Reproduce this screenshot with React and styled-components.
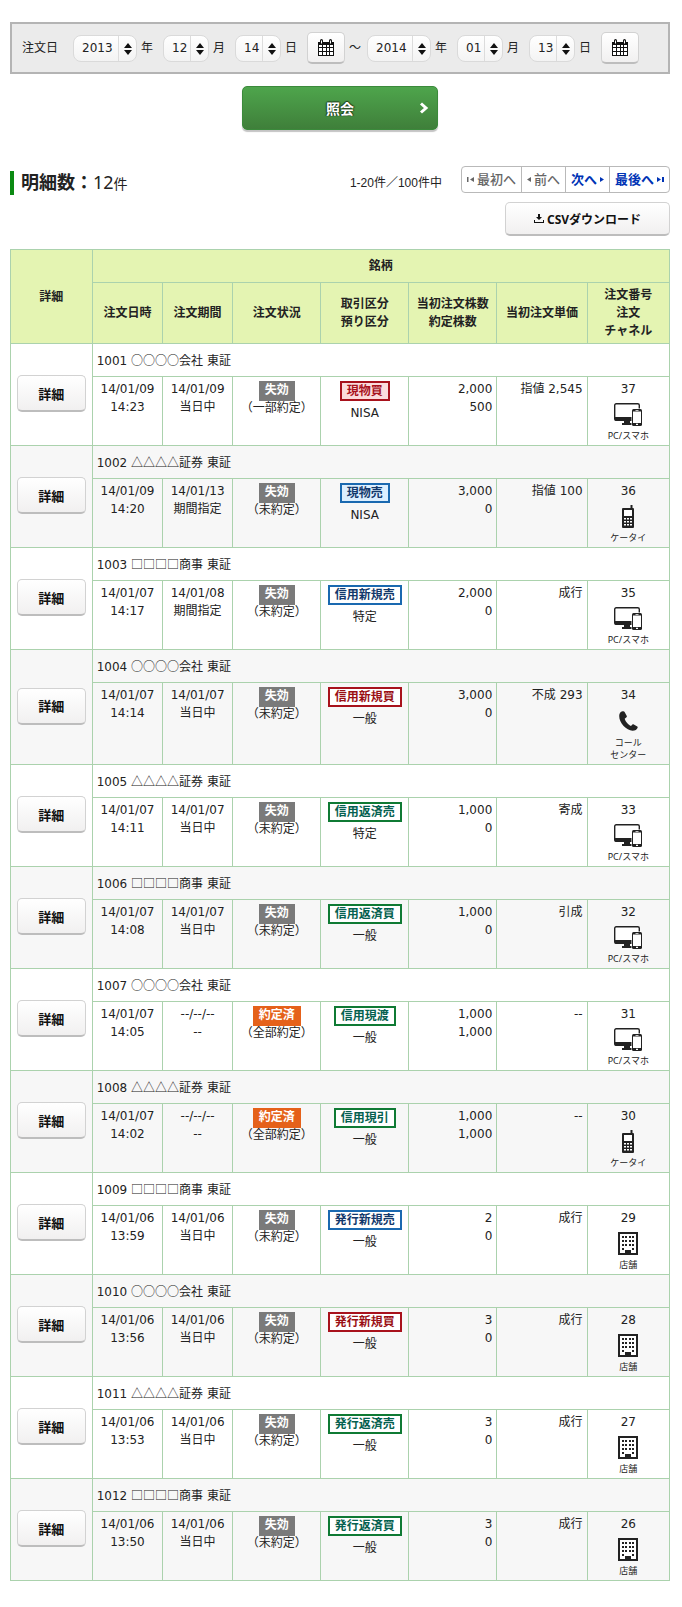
import React from 'react';
import styled, { createGlobalStyle, css } from "styled-components";

const GlobalStyle = createGlobalStyle`
  * {
    box-sizing: border-box;
  }
  body {
    margin: 0;
    background: #fff;
    color: #222;
    font-family: "DejaVu Sans", "Noto Sans CJK JP", sans-serif;
    font-size: 12px;
    line-height: 18px;
  }
  button, select {
    font-family: inherit;
    font-size: inherit;
    color: inherit;
  }
`;

const Page = styled.main`
  padding: 22px 12px 24px 10px;
`;

const SearchForm = styled.form`
  display: flex;
  flex-direction: column;
  align-items: center;
  gap: 12px;
`;

const DateBar = styled.div`
  display: flex;
  align-items: center;
  width: 100%;
  height: 52px;
  padding: 0 10px;
  background: #ebebeb;
  border: 2px solid #b4b4b4;
`;

const BarLabel = styled.span`
  margin-right: 15px;
`;

const DateFields = styled.div`
  display: flex;
  align-items: center;
  gap: 10px;
`;

const Field = styled.label`
  display: flex;
  align-items: center;
  gap: 4px;
`;

const SelectBox = styled.span`
  position: relative;
  display: block;

  svg {
    position: absolute;
    top: 8px;
    right: 5px;
    pointer-events: none;
  }
`;

const Select = styled.select`
  display: block;
  appearance: none;
  width: ${({ $year }) => ($year ? "64px" : "46px")};
  height: 27px;
  padding: 0 0 0 8px;
  border: 1px solid #dadada;
  border-radius: 8px;
  background:
    linear-gradient(#dcdcdc, #dcdcdc) right 17px top / 1px 100% no-repeat,
    linear-gradient(#ffffff, #f3f3f3);
`;

const plainButton = css`
  background: linear-gradient(#ffffff, #f1f0f0);
  border: 1px solid #d2d2d2;
  border-bottom: 2px solid #bdbdbd;
  border-radius: 5px;
  cursor: pointer;
`;

const CalendarButton = styled.button`
  ${plainButton}
  display: flex;
  align-items: center;
  justify-content: center;
  width: 38px;
  height: 32px;
  padding: 0;
`;

const Tilde = styled.span`
  margin: 0 6px 0 4px;
`;

const SubmitButton = styled.button`
  display: grid;
  grid-template-columns: 1fr auto 1fr;
  align-items: center;
  width: 196px;
  height: 44px;
  padding: 0 8px;
  border: 1px solid #3b8a3b;
  border-radius: 5px;
  background: linear-gradient(#4ea54c, #3f7f3a);
  box-shadow: 0 2px 1px #c4c4c4;
  color: #fff;
  font-size: 14px;
  font-weight: bold;
  text-shadow: 0 -1px 1px #1d3d1b, 1px 0 1px #1d3d1b, -1px 0 1px #1d3d1b;
  cursor: pointer;

  span {
    grid-column: 2;
  }

  svg {
    justify-self: end;
  }
`;

const Summary = styled.div`
  display: flex;
  align-items: flex-start;
  margin-top: 36px;
`;

const Heading = styled.h1`
  margin: 5px 0 0;
  padding-left: 7px;
  border-left: 4px solid #0b8a12;
  font-size: 18px;
  line-height: 22px;

  span {
    font-family: "Noto Sans", "Noto Sans CJK JP", sans-serif;
    font-weight: normal;
  }

  small {
    font-size: 14px;
    font-weight: normal;
  }
`;

const Range = styled.span`
  margin: 8px 19px 0 auto;
  font-family: "Liberation Sans", "Noto Sans CJK JP", sans-serif;
`;

const Pager = styled.nav`
  display: flex;
  height: 27px;
  border: 1px solid #b9b9b9;
  border-radius: 4px;
`;

const PagerLink = styled.a`
  display: flex;
  align-items: center;
  gap: 2px;
  padding: 0 5px;
  color: ${({ $off }) => ($off ? "#666" : "#0033b5")};
  font-size: 13px;
  font-weight: ${({ $off }) => ($off ? "500" : "bold")};
  text-decoration: none;

  & + & {
    border-left: 1px solid #b9b9b9;
  }
`;

const DownloadRow = styled.div`
  display: flex;
  justify-content: flex-end;
  margin: 7px 0 13px;
`;

const DownloadButton = styled.button`
  ${plainButton}
  display: flex;
  align-items: center;
  justify-content: center;
  gap: 3px;
  width: 165px;
  height: 34px;
  color: #111;
  font-family: "Noto Sans", "Noto Sans CJK JP", sans-serif;
  font-weight: bold;
`;

const Table = styled.table`
  width: 100%;
  table-layout: fixed;
  border-collapse: collapse;
`;

const Th = styled.th`
  height: ${({ $top }) => ($top ? "33px" : "61px")};
  padding: 3px 0;
  border: 1px solid #abd2ad;
  background: #e4f4b2;
`;

const Order = styled.tbody`
  &:nth-of-type(even) {
    background: #f7f7f7;
  }
`;

const Cell = styled.td`
  padding: 3px 4px;
  border: 1px solid #abd2ad;
  text-align: ${({ $align }) => $align || "center"};
  vertical-align: top;
  white-space: nowrap;
`;

const ButtonCell = styled(Cell)`
  padding: 3px 4px 5px;
  vertical-align: middle;
`;

const NameCell = styled(Cell)`
  height: 33px;
  text-align: left;
  vertical-align: middle;
`;

const Company = styled.span`
  font-family: "Noto Sans CJK JP", sans-serif;
`;

const DetailButton = styled.button`
  ${plainButton}
  width: 69px;
  height: 37px;
  padding: 0;
  color: #111;
  font-size: 13px;
  font-weight: bold;
`;

const Centered = styled.div`
  display: flex;
  flex-direction: column;
  align-items: center;
`;

const Status = styled.span`
  height: 20px;
  margin-top: 1px;
  padding: 0 6px;
  background: ${({ $done }) => ($done ? "#e5611a" : "#7a7a7a")};
  color: #fff;
  font-weight: bold;
`;

const StatusNote = styled.span`
  line-height: 14px;
`;

const tones = {
  buyFill: ["#a8121c", "#a8121c", "#fbdcdc"],
  sellFill: ["#1a69b0", "#12386b", "#dcefff"],
  buy: ["#a8121c", "#9a0f14", "#fff"],
  sell: ["#1a69b0", "#12386b", "#fff"],
  repay: ["#0f7a34", "#056150", "#fff"],
};

const Kind = styled.span`
  height: 20px;
  margin: 1px 0 3px;
  padding: 0 5px;
  border: 2px solid ${({ $tone }) => tones[$tone][0]};
  color: ${({ $tone }) => tones[$tone][1]};
  background: ${({ $tone }) => tones[$tone][2]};
  font-weight: bold;
  line-height: 16px;
`;

const IconBox = styled.span`
  display: flex;
  align-items: center;
  height: ${({ $tall }) => ($tall ? "33px" : "32px")};
`;

const Caption = styled.span`
  font-family: "Noto Sans", "Noto Sans CJK JP", sans-serif;
  font-size: 9px;
  line-height: 12px;
`;

const SpinArrows = () => (
  <svg width="8" height="12" viewBox="0 0 8 12" fill="#111">
    <path d="M4 0 8 5H0zM4 12 0 7h8z" />
  </svg>
);

const CalendarIcon = () => (
  <svg width="16" height="18" viewBox="0 0 16 18">
    <path d="M0 3h16v14H0z" fill="#111" />
    <path d="M1 6h3v2H1zm4 0h3v2H5zm4 0h2v2H9zm3 0h3v2h-3zM1 9h3v3H1zm4 0h3v3H5zm4 0h2v3H9zm3 0h3v3h-3zM1 13h3v3H1zm4 0h3v3H5zm4 0h2v3H9zm3 0h3v3h-3z" fill="#fff" />
    <path d="M3.500 1.500v3M12.500 1.500v3" stroke="#111" strokeWidth="3" strokeLinecap="round" />
    <path d="M3.500 1.500v3M12.500 1.500v3" stroke="#fff" strokeWidth="1" />
  </svg>
);

const ChevronIcon = () => (
  <svg width="10" height="12" viewBox="0 0 10 12">
    <path d="M2 1.500 7 6 2 10.500" fill="none" stroke="#fff" strokeWidth="3" />
  </svg>
);

const DownloadIcon = () => (
  <svg width="10" height="9" viewBox="0 0 10 9" fill="#111">
    <path d="M4 0h2v3h2L5 6 2 3h2zM0 6h1v2h8V6h1v3H0z" />
  </svg>
);

const PageArrow = ({ back, edge }) => (
  <svg width={edge ? 8 : 5} height="7" viewBox={edge ? "0 0 8 7" : "0 0 5 7"} fill="currentColor">
    {back && !edge && <path d="M4 1v5L0 3.500z" />}
    {back && edge && <path d="M0 1h1.500v5H0zM7 1v5L3 3.500z" />}
    {!back && !edge && <path d="M1 1v5l4-2.500z" />}
    {!back && edge && <path d="M6 1h2v5H6zM1 1v5l4-2.500z" />}
  </svg>
);

const PcIcon = () => (
  <svg width="28" height="23" viewBox="0 0 28 23">
    <rect x="0.700" y="0.700" width="24.600" height="16.600" rx="1.500" fill="#fff" stroke="#222" strokeWidth="1.400" />
    <path d="M.7 14h24.500v3.800H.7zM10 17h6v3h2v2H8v-2h2z" fill="#222" />
    <rect x="17.500" y="5.500" width="10.500" height="17.500" rx="1.500" fill="#fff" />
    <rect x="18" y="6" width="10" height="17" rx="1.500" fill="#222" />
    <path d="M19 8.500h8V20h-8z" fill="#fff" />
    <path d="M21.500 7h3v.7h-3zM22 20.800h2v1.200h-2z" fill="#fff" />
  </svg>
);

const MobileIcon = () => (
  <svg width="12" height="23" viewBox="0 0 12 23">
    <path d="M8.500 0h2v3h.5a1 1 0 0 1 1 1v18a1 1 0 0 1-1 1H1a1 1 0 0 1-1-1V4a1 1 0 0 1 1-1h7.500z" fill="#222" />
    <path d="M2 5h8v6H2zM2 13h2v1.500H2zm3 0h2v1.500H5zm3 0h2v1.500H8zM2 16h2v1.500H2zm3 0h2v1.500H5zm3 0h2v1.500H8zM2 19h2v1.500H2zm3 0h2v1.500H5zm3 0h2v1.500H8z" fill="#fff" />
  </svg>
);

const PhoneIcon = () => (
  <svg width="19" height="20" viewBox="0 0 19 20">
    <path d="M3.500.300C1.500.800.200 2.500.200 5c0 7 7.300 14.500 13.300 14.800 2.500 0 4.700-1.300 5.200-3.300.100-.500 0-.800-.400-1.100l-3.500-2c-.500-.300-1-.200-1.400.200L12 15c-2.500-1-5.600-4.600-6.300-7.300L7.500 6.300c.4-.4.500-.8.300-1.300L5.600.900C5.300.300 4.500 0 3.500.300z" fill="#222" />
  </svg>
);

const StoreIcon = () => (
  <svg width="20" height="23" viewBox="0 0 20 23">
    <path d="M1 1h18v21H1z" fill="#fff" stroke="#222" strokeWidth="2" />
    <path d="M4 4h2v2H4zm3 0h2v2H7zm4 0h2v2h-2zm3 0h2v2h-2zM4 8h2v2H4zm3 0h2v2H7zm4 0h2v2h-2zm3 0h2v2h-2zM4 12h2v2H4zm3 0h2v2H7zm4 0h2v2h-2zm3 0h2v2h-2zM4 16h2v2H4zm10 0h2v2h-2zM7 18h6v4H7z" fill="#222" />
  </svg>
);

const channels = {
  pc: { icon: <PcIcon />, label: "PC/スマホ" },
  mobile: { icon: <MobileIcon />, label: "ケータイ" },
  call: { icon: <PhoneIcon />, label: <>コール<br />センター</>, tall: true },
  store: { icon: <StoreIcon />, label: "店舗" },
};

const columns = ["12.4%", "10.7%", "10.6%", "13.4%", "13.3%", "13.4%", "13.7%", "12.5%"];

const orders = [
  { code: "1001", name: "○○○○会社", date: "14/01/09", time: "14:23", until: "14/01/09", term: "当日中", note: "（一部約定）", kind: "現物買", tone: "buyFill", account: "NISA", qty: "2,000", filled: "500", price: "指値 2,545", no: 37, channel: "pc" },
  { code: "1002", name: "△△△△証券", date: "14/01/09", time: "14:20", until: "14/01/13", term: "期間指定", note: "（未約定）", kind: "現物売", tone: "sellFill", account: "NISA", qty: "3,000", filled: "0", price: "指値 100", no: 36, channel: "mobile" },
  { code: "1003", name: "□□□□商事", date: "14/01/07", time: "14:17", until: "14/01/08", term: "期間指定", note: "（未約定）", kind: "信用新規売", tone: "sell", account: "特定", qty: "2,000", filled: "0", price: "成行", no: 35, channel: "pc" },
  { code: "1004", name: "○○○○会社", date: "14/01/07", time: "14:14", until: "14/01/07", term: "当日中", note: "（未約定）", kind: "信用新規買", tone: "buy", account: "一般", qty: "3,000", filled: "0", price: "不成 293", no: 34, channel: "call" },
  { code: "1005", name: "△△△△証券", date: "14/01/07", time: "14:11", until: "14/01/07", term: "当日中", note: "（未約定）", kind: "信用返済売", tone: "repay", account: "特定", qty: "1,000", filled: "0", price: "寄成", no: 33, channel: "pc" },
  { code: "1006", name: "□□□□商事", date: "14/01/07", time: "14:08", until: "14/01/07", term: "当日中", note: "（未約定）", kind: "信用返済買", tone: "repay", account: "一般", qty: "1,000", filled: "0", price: "引成", no: 32, channel: "pc" },
  { code: "1007", name: "○○○○会社", date: "14/01/07", time: "14:05", until: "--/--/--", term: "--", done: true, note: "（全部約定）", kind: "信用現渡", tone: "repay", account: "一般", qty: "1,000", filled: "1,000", price: "--", no: 31, channel: "pc" },
  { code: "1008", name: "△△△△証券", date: "14/01/07", time: "14:02", until: "--/--/--", term: "--", done: true, note: "（全部約定）", kind: "信用現引", tone: "repay", account: "一般", qty: "1,000", filled: "1,000", price: "--", no: 30, channel: "mobile" },
  { code: "1009", name: "□□□□商事", date: "14/01/06", time: "13:59", until: "14/01/06", term: "当日中", note: "（未約定）", kind: "発行新規売", tone: "sell", account: "一般", qty: "2", filled: "0", price: "成行", no: 29, channel: "store" },
  { code: "1010", name: "○○○○会社", date: "14/01/06", time: "13:56", until: "14/01/06", term: "当日中", note: "（未約定）", kind: "発行新規買", tone: "buy", account: "一般", qty: "3", filled: "0", price: "成行", no: 28, channel: "store" },
  { code: "1011", name: "△△△△証券", date: "14/01/06", time: "13:53", until: "14/01/06", term: "当日中", note: "（未約定）", kind: "発行返済売", tone: "repay", account: "一般", qty: "3", filled: "0", price: "成行", no: 27, channel: "store" },
  { code: "1012", name: "□□□□商事", date: "14/01/06", time: "13:50", until: "14/01/06", term: "当日中", note: "（未約定）", kind: "発行返済買", tone: "repay", account: "一般", qty: "3", filled: "0", price: "成行", no: 26, channel: "store" },
];

const range = (from, to) =>
  Array.from({ length: to - from + 1 }, (_, i) => String(from + i).padStart(2, "0"));

const DateSelect = ({ id, value, options, unit, year }) => (
  <Field htmlFor={id}>
    <SelectBox>
      <Select id={id} defaultValue={value} $year={year}>
        {options.map((o) => <option key={o}>{o}</option>)}
      </Select>
      <SpinArrows />
    </SelectBox>
    {unit}
  </Field>
);

const DateGroup = ({ name, date }) => (
  <DateFields>
    <DateSelect id={`${name}-year`} value={date[0]} options={range(2010, 2014)} unit="年" year />
    <DateSelect id={`${name}-month`} value={date[1]} options={range(1, 12)} unit="月" />
    <DateSelect id={`${name}-day`} value={date[2]} options={range(1, 31)} unit="日" />
    <CalendarButton type="button" aria-label="カレンダー"><CalendarIcon /></CalendarButton>
  </DateFields>
);

const OrderRows = ({ order }) => {
  const channel = channels[order.channel];
  return (
    <Order>
      <tr>
        <ButtonCell rowSpan={2}>
          <DetailButton type="button">詳細</DetailButton>
        </ButtonCell>
        <NameCell colSpan={7}>{order.code} <Company>{order.name}</Company> 東証</NameCell>
      </tr>
      <tr>
        <Cell>{order.date}<br />{order.time}</Cell>
        <Cell>{order.until}<br />{order.term}</Cell>
        <Cell>
          <Centered>
            <Status $done={order.done}>{order.done ? "約定済" : "失効"}</Status>
            <StatusNote>{order.note}</StatusNote>
          </Centered>
        </Cell>
        <Cell>
          <Centered>
            <Kind $tone={order.tone}>{order.kind}</Kind>
            {order.account}
          </Centered>
        </Cell>
        <Cell $align="right">{order.qty}<br />{order.filled}</Cell>
        <Cell $align="right">{order.price}</Cell>
        <Cell>
          <Centered>
            {order.no}
            <IconBox $tall={channel.tall}>{channel.icon}</IconBox>
            <Caption>{channel.label}</Caption>
          </Centered>
        </Cell>
      </tr>
    </Order>
  );
};

const App = () => {
  return (
    <>
      <GlobalStyle />
      <Page>
        <SearchForm onSubmit={(e) => e.preventDefault()}>
          <DateBar>
            <BarLabel>注文日</BarLabel>
            <DateGroup name="from" date={["2013", "12", "14"]} />
            <Tilde>～</Tilde>
            <DateGroup name="to" date={["2014", "01", "13"]} />
          </DateBar>
          <SubmitButton type="submit">
            <span>照会</span>
            <ChevronIcon />
          </SubmitButton>
        </SearchForm>

        <Summary>
          <Heading>明細数：<span>12</span><small>件</small></Heading>
          <Range>1-20件／100件中</Range>
          <Pager>
            <PagerLink href="#" $off><PageArrow back edge />最初へ</PagerLink>
            <PagerLink href="#" $off><PageArrow back />前へ</PagerLink>
            <PagerLink href="#">次へ<PageArrow /></PagerLink>
            <PagerLink href="#">最後へ<PageArrow edge /></PagerLink>
          </Pager>
        </Summary>
        <DownloadRow>
          <DownloadButton type="button"><DownloadIcon />CSVダウンロード</DownloadButton>
        </DownloadRow>

        <Table>
          <colgroup>
            {columns.map((width, i) => <col key={i} width={width} />)}
          </colgroup>
          <thead>
            <tr>
              <Th rowSpan={2} $top>詳細</Th>
              <Th colSpan={7} $top>銘柄</Th>
            </tr>
            <tr>
              <Th>注文日時</Th>
              <Th>注文期間</Th>
              <Th>注文状況</Th>
              <Th>取引区分<br />預り区分</Th>
              <Th>当初注文株数<br />約定株数</Th>
              <Th>当初注文単価</Th>
              <Th>注文番号<br />注文<br />チャネル</Th>
            </tr>
          </thead>
          {orders.map((order) => <OrderRows key={order.code} order={order} />)}
        </Table>
      </Page>
    </>
  );
};

export default App;
